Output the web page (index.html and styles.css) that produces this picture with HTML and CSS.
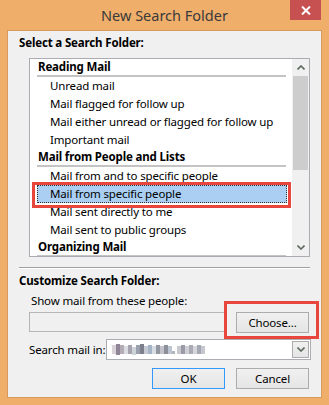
FILE: index.html
```html
<!DOCTYPE html>
<html lang="en">
<head>
    <meta charset="UTF-8">
    <title>New Search Folder</title>
    <link rel="stylesheet" href="styles.css">
</head>
<body>

<div class="window">
    <div class="titlebar">
        <span></span>
        <div class="title">New Search Folder</div>
        <div class="close">
            <svg width="10" height="9" viewBox="0 0 10 9"><path d="M1 0.5 L9 8.5 M9 0.5 L1 8.5" stroke="#fff" stroke-width="2"/></svg>
        </div>
    </div>

    <div class="dialog">
        <div class="group-label">Select a Search Folder:</div>

        <div class="listbox">
            <ul class="folders">
                <li class="heading">Reading Mail</li>
                <li>Unread mail</li>
                <li>Mail flagged for follow up</li>
                <li>Mail either unread or flagged for follow up</li>
                <li>Important mail</li>
                <li class="heading">Mail from People and Lists</li>
                <li>Mail from and to specific people</li>
                <li class="selected">Mail from specific people</li>
                <li>Mail sent directly to me</li>
                <li>Mail sent to public groups</li>
                <li class="heading">Organizing Mail</li>
            </ul>
            <div class="scrollbar">
                <div class="arrow">
                    <svg width="8" height="5" viewBox="0 0 8 5"><path d="M0.5 4.5 L4 1 L7.5 4.5" fill="none" stroke="#5f6a5f" stroke-width="1.6"/></svg>
                </div>
                <div class="track"><div class="thumb"></div></div>
                <div class="arrow">
                    <svg width="8" height="5" viewBox="0 0 8 5"><path d="M0.5 0.5 L4 4 L7.5 0.5" fill="none" stroke="#5f6a5f" stroke-width="1.6"/></svg>
                </div>
            </div>
        </div>

        <div class="separator"></div>

        <div class="group-label">Customize Search Folder:</div>
        <div class="field-label">Show mail from these people:</div>
        <div class="people-row">
            <div class="textbox"></div>
            <button class="btn choose">Choose...</button>
        </div>

        <div class="search-row">
            <span class="search-label">Search mail in:</span>
            <div class="combo">
                <!-- blurred mailbox name -->
                <svg class="blur" width="94" height="11" viewBox="0 0 94 11">
                    <rect x="0" y="1" width="4" height="9" fill="#d9d2d8"/>
                    <rect x="4" y="0" width="4" height="11" fill="#8f8596"/>
                    <rect x="8" y="1" width="4" height="9" fill="#b4adb6"/>
                    <rect x="12" y="2" width="4" height="8" fill="#dcdde2"/>
                    <rect x="16" y="1" width="4" height="9" fill="#a6a4ae"/>
                    <rect x="20" y="3" width="4" height="8" fill="#cfd3da"/>
                    <rect x="24" y="1" width="4" height="9" fill="#9aa0ad"/>
                    <rect x="28" y="0" width="4" height="10" fill="#7e7f8c"/>
                    <rect x="32" y="2" width="4" height="8" fill="#c6cbd3"/>
                    <rect x="36" y="1" width="4" height="9" fill="#a5b4c6"/>
                    <rect x="40" y="2" width="4" height="8" fill="#d8dde4"/>
                    <rect x="44" y="1" width="4" height="9" fill="#9397a2"/>
                    <rect x="48" y="2" width="4" height="8" fill="#c3c4cb"/>
                    <rect x="52" y="1" width="4" height="9" fill="#8d8f9a"/>
                    <rect x="56" y="2" width="4" height="8" fill="#bdc5d0"/>
                    <rect x="60" y="7" width="3" height="3" fill="#b0b4bc"/>
                    <rect x="65" y="2" width="4" height="8" fill="#c8c9cf"/>
                    <rect x="69" y="1" width="4" height="9" fill="#9a9ba6"/>
                    <rect x="73" y="2" width="4" height="8" fill="#cfd0d6"/>
                    <rect x="77" y="1" width="4" height="9" fill="#a9abb4"/>
                    <rect x="81" y="2" width="4" height="8" fill="#d4d6dc"/>
                    <rect x="85" y="1" width="4" height="9" fill="#a4a8b2"/>
                    <rect x="89" y="2" width="4" height="8" fill="#c5c8cf"/>
                </svg>
                <div class="combo-btn">
                    <svg width="8" height="5" viewBox="0 0 8 5"><path d="M0.5 0.5 L4 4 L7.5 0.5" fill="none" stroke="#5f6a5f" stroke-width="1.6"/></svg>
                </div>
            </div>
        </div>

        <div class="actions">
            <button class="btn default">OK</button>
            <button class="btn">Cancel</button>
        </div>
    </div>
</div>

</body>
</html>
```

FILE: styles.css
```css
* { box-sizing: border-box; margin: 0; padding: 0; }
body { font-family: "Noto Sans", "DejaVu Sans", sans-serif; font-size: 11.5px; letter-spacing: -0.15px; color: #000; background: #f0ae6b; }

/* window frame */
.window {
    width: 329px;
    height: 405px;
    background: #f0ae6b;
    padding: 0 7px 7px;
}
.titlebar {
    height: 30px;
    display: grid;
    grid-template-columns: 1fr auto 1fr;
}
.title {
    font-size: 14.5px;
    letter-spacing: 0;
    line-height: 30px;
    color: #3a3a3a;
}
.close {
    justify-self: end;
    width: 31px;
    height: 20px;
    margin-right: 1px;
    background: #c75050;
    display: flex;
    align-items: center;
    justify-content: center;
}

/* dialog body */
.dialog {
    height: 368px;
    border: 1px solid #d89a5c;
    background: #f0f0f0;
}
.group-label {
    font-weight: bold;
    line-height: 16px;
    padding-left: 11px;
    margin-top: 4px;
}
.field-label {
    line-height: 16px;
    padding-left: 23px;
    margin-top: 4px;
}

/* folder list */
.listbox {
    display: flex;
    margin: 7px 0 0 21px;
    width: 281px;
    height: 199px;
    border: 1px solid #abadb3;
    background: #fff;
    overflow: hidden;
}
.folders {
    flex: 1;
    list-style: none;
}
.folders li {
    height: 18px;
    line-height: 18px;
    margin: 0 6px 0 7px;
    padding-left: 13px;
    white-space: nowrap;
    position: relative;
}
.folders li.heading {
    font-weight: bold;
    padding-left: 1px;
    line-height: 16px;
    border-bottom: 2px solid #c4c4c4;
}
.folders li.selected {
    background: #aacff3;
    border: 1px dotted #333;
    padding-left: 12px;
    line-height: 16px;
    margin-right: 5px;
}
/* red highlight drawn on the screenshot */
.folders li.selected::after {
    content: "";
    position: absolute;
    top: -4px;
    right: -5px;
    bottom: -6px;
    left: -6px;
    border: 3px solid #e8453c;
}

.scrollbar {
    width: 17px;
    display: flex;
    flex-direction: column;
    background: #f0f0f0;
}
.scrollbar .arrow {
    height: 17px;
    display: flex;
    align-items: center;
    justify-content: center;
}
.track { flex: 1; }
.thumb {
    height: 94px;
    margin: 0 1px;
    background: #cdcdcd;
}

.separator {
    margin: 10px 11px 0 11px;
    border-top: 1px solid #a0a0a0;
    border-bottom: 1px solid #fff;
}

/* controls */
.people-row {
    display: flex;
    gap: 10px;
    margin: 3px 0 0 21px;
}
.textbox {
    width: 197px;
    height: 20px;
    border: 1px solid #b5b5b5;
    background: #f0f0f0;
}
.btn {
    width: 73px;
    height: 21px;
    border: 1px solid #acacac;
    background: linear-gradient(#f0f0f0, #e5e5e5);
    font-family: inherit;
    font-size: 11.5px;
    letter-spacing: -0.15px;
    color: #000;
}
.btn.default { border-color: #3399ff; }
.choose { position: relative; }
.choose::after {
    content: "";
    position: absolute;
    top: -12px;
    right: -11px;
    bottom: -7px;
    left: -13px;
    border: 3px solid #e8453c;
}

.search-row {
    display: flex;
    align-items: center;
    margin: 6px 0 0 21px;
}
.search-label { width: 77px; white-space: nowrap; }
.combo {
    width: 205px;
    height: 21px;
    border: 1px solid #abadb3;
    background: #fff;
    display: flex;
    align-items: center;
    padding: 0 1px 0 5px;
}
.blur { flex: none; }
.combo-btn {
    margin-left: auto;
    width: 17px;
    height: 17px;
    border: 1px solid #acacac;
    background: linear-gradient(#f0f0f0, #e5e5e5);
    display: flex;
    align-items: center;
    justify-content: center;
}

.actions {
    display: flex;
    justify-content: flex-end;
    gap: 11px;
    margin-top: 8px;
    padding-right: 12px;
}
```
